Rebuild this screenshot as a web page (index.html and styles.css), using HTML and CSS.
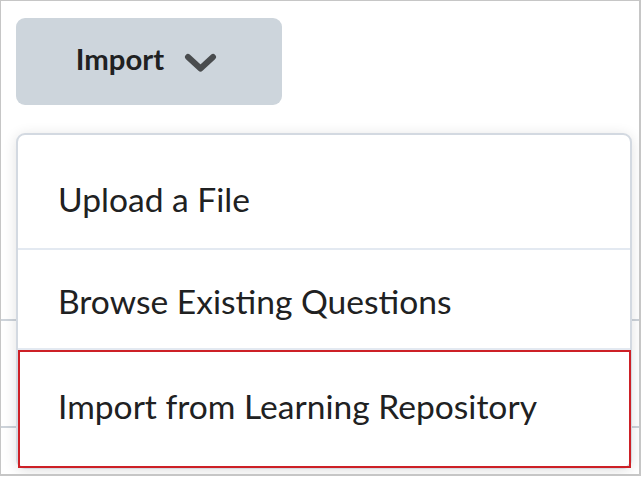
FILE: index.html
```html
<!DOCTYPE html>
<html>
<head>
<meta charset="utf-8">
<link rel="stylesheet" href="styles.css">
</head>
<body>
<div class="frame">
  <div class="toolbar">
    <button class="btn">
      <span class="btn-label">Import</span>
      <svg class="chev" width="33" height="20" viewBox="0 0 33 20"><path d="M4 4 L16.5 15.5 L29 4" fill="none" stroke="#494c4e" stroke-width="6" stroke-linecap="round" stroke-linejoin="round"/></svg>
    </button>
  </div>
  <div class="table">
    <div class="row r1"></div>
    <div class="row r2"></div>
  </div>
  <div class="menu">
    <div class="item first">Upload a File</div>
    <div class="item middle">Browse Existing Questions</div>
    <div class="item last selected">Import from Learning Repository</div>
  </div>
</div>
</body>
</html>
```
FILE: styles.css
```css
* { box-sizing: border-box; }
html, body { margin: 0; padding: 0; background: #fff; }
body { font-family: Lato, "Noto Sans", sans-serif; color: #202122; }
.frame {
  position: relative;
  width: 641px;
  height: 476px;
  border: 1px solid #c6c6c6;
  border-right-width: 2px;
  border-bottom-width: 2px;
  overflow: hidden;
}
.toolbar { padding: 17px 0 0 15px; }
.btn {
  display: flex;
  align-items: center;
  justify-content: center;
  gap: 20px;
  width: 266px;
  height: 87px;
  border: none;
  border-radius: 9px;
  background: #cdd5dc;
  font-family: Lato, sans-serif;
  font-weight: 700;
  font-size: 29.3px;
  color: #202122;
  padding: 0 5px 0 0;
}
.btn-label { line-height: 1; margin-bottom: 5px; }
.chev { display: block; margin-top: 2px; }
.table { padding-top: 214px; }
.row { height: 2px; background: #cdd3da; }
.r2 { margin-top: 105px; }
.menu {
  position: absolute;
  left: 15px;
  top: 132px;
  width: 616px;
  height: 336px;
  background: #fff;
  border: 2px solid #d3d9e1;
  border-radius: 9px;
  box-shadow: 0 2px 14px rgba(0,0,0,0.12);
  display: flex;
  flex-direction: column;
}
.item {
  display: flex;
  align-items: center;
  padding-left: 40px;
  font-size: 33.6px;
  height: 100px;
  border-bottom: 2px solid #e3e9f1;
}
.item.first { height: 115px; padding-top: 14px; }
.item.middle { padding-top: 4px; }
.item.last { border-bottom: none; flex: 1; height: auto; padding-bottom: 7px; }
.item.selected {
  border: 2px solid #cd2026;
  margin: 0 -1px -1px 0;
  padding-left: 38px;
}
```
